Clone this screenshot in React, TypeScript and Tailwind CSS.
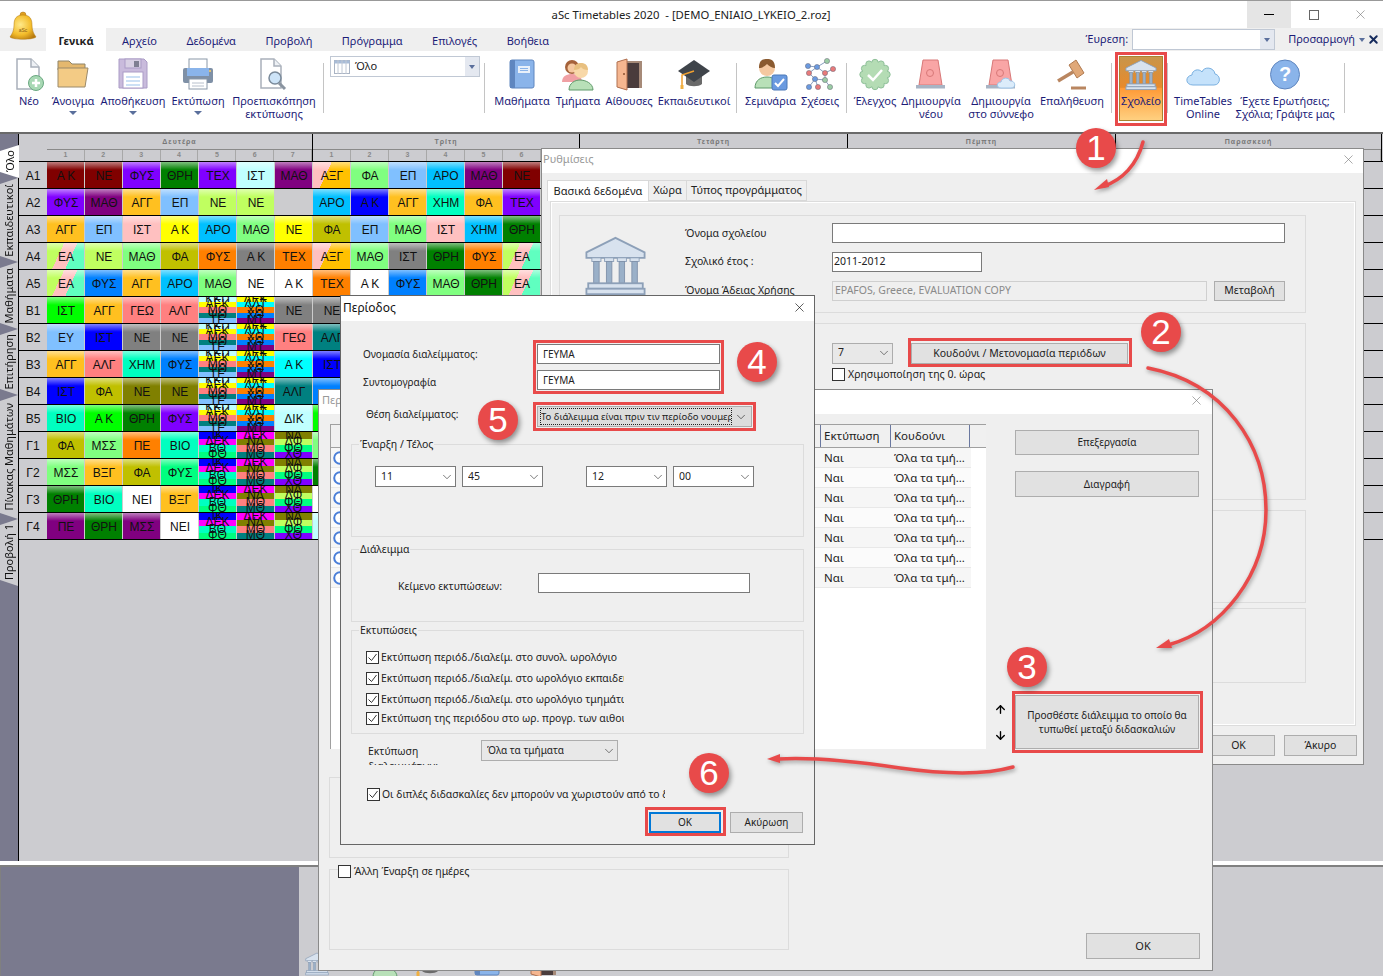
import { ArrowDown, ArrowUp, ChevronDown, X } from "lucide-react";
import { ReactNode } from "react";
import clsx from "clsx";
import { twMerge } from "tailwind-merge";

const colors: Record<string, string> = {
  mr: "bg-[#800000]",
  vi: "bg-[#8000ff]",
  dg: "bg-[#008000]",
  pu: "bg-[#800080]",
  lc: "bg-[#c0ffff]",
  go: "bg-[#ffc020]",
  sk: "bg-[#80c0ff]",
  li: "bg-[#c0ff60]",
  pk: "bg-[#ffc0c0]",
  ye: "bg-[#ffff00]",
  ar: "bg-[#00c0ff]",
  lg: "bg-[#80ff80]",
  oy: "bg-[#c0c000]",
  or: "bg-[#ff8000]",
  gr: "bg-[#808080]",
  wh: "bg-white",
  bl: "bg-[#0080ff]",
  ng: "bg-[#00ff00]",
  sa: "bg-[#ff8080]",
  db: "bg-[#0000ff]",
  te: "bg-[#008080]",
  aq: "bg-[#00ffc0]",
  sg: "bg-[#00ff80]",
  ol: "bg-[#808000]",
  cy: "bg-[#00ffff]",
  mg: "bg-[#ff00ff]",
  no: "bg-[#cccccf]",
  t1: "bg-[linear-gradient(115deg,#c0ff60_0_35%,#ffc0c0_35%_62%,#60ffc0_62%)]",
  t2: "bg-[linear-gradient(115deg,#ffc0c0_0_38%,#ffc000_38%)]",
};

const stacks: Record<string, string[]> = {
  A: ["ΚΚΠ:lc", "ΑΕΚ:ye", "ΜΘ:sa", "ΨΘ:te", "ΤΕ:sk"],
  B: ["ΛΕΚ:ye", "ΛΛΤ:cy", "ΧΘ:or", "ΧΘ:bl", "ΜΤ:pu"],
  C: ["ΙΚ:db", "ΔΕΚ:mg", "ΒΘ:aq", "ΦΘ:sg"],
  D: ["ΔΕΚ:mg", "ΝΛ:ol", "ΜΘ:sa", "ΜΘ:te"],
  E: ["ΝΛ:ol", "ΔΦ:li", "ΦΘ:sg", "ΧΘ:vi"],
};

const rows: [string, string[]][] = [
  ["A1", ["Α Κ:mr", "ΝΕ:mr", "ΦΥΣ:vi", "ΘΡΗ:dg", "ΤΕΧ:vi", "ΙΣΤ:lc", "ΜΑΘ:pu", "ΑΞΓ:t2", "ΦΑ:lg", "ΕΠ:sk", "ΑΡΟ:ar", "ΜΑΘ:pu", "ΝΕ:mr"]],
  ["A2", ["ΦΥΣ:vi", "ΜΑΘ:pu", "ΑΓΓ:go", "ΕΠ:sk", "ΝΕ:li", "ΝΕ:li", ":no", "ΑΡΟ:ar", "Α Κ:db", "ΑΓΓ:go", "ΧΗΜ:aq", "ΦΑ:go", "ΤΕΧ:vi"]],
  ["A3", ["ΑΓΓ:go", "ΕΠ:sk", "ΙΣΤ:pk", "Α Κ:ye", "ΑΡΟ:ar", "ΜΑΘ:lg", "ΝΕ:ye", "ΦΑ:oy", "ΕΠ:sk", "ΜΑΘ:lg", "ΙΣΤ:pk", "ΧΗΜ:ar", "ΘΡΗ:dg"]],
  ["A4", ["ΕΑ:t1", "ΝΕ:li", "ΜΑΘ:lg", "ΦΑ:oy", "ΦΥΣ:or", "Α Κ:gr", "ΤΕΧ:or", "ΑΞΓ:t2", "ΜΑΘ:lg", "ΙΣΤ:gr", "ΘΡΗ:dg", "ΦΥΣ:or", "ΕΑ:t1"]],
  ["A5", ["ΕΑ:t1", "ΦΥΣ:bl", "ΑΓΓ:go", "ΑΡΟ:ar", "ΜΑΘ:lg", "ΝΕ:wh", "Α Κ:wh", "ΤΕΧ:or", "Α Κ:wh", "ΦΥΣ:bl", "ΜΑΘ:lg", "ΘΡΗ:dg", "ΕΑ:t1"]],
  ["B1", ["ΙΣΤ:ng", "ΑΓΓ:go", "ΓΕΩ:sa", "ΑΛΓ:sa", "#A", "#B", "ΝΕ:gr", "ΝΕ:gr"]],
  ["B2", ["ΕΥ:sk", "ΙΣΤ:db", "ΝΕ:gr", "ΝΕ:gr", "#A", "#B", "ΓΕΩ:sa", "ΑΛΓ:te"]],
  ["B3", ["ΑΓΓ:go", "ΑΛΓ:sa", "ΧΗΜ:aq", "ΦΥΣ:bl", "#A", "#B", "Α Κ:cy", "ΙΣΤ:db"]],
  ["B4", ["ΙΣΤ:db", "ΦΑ:oy", "ΝΕ:ol", "ΝΕ:ol", "#A", "#B", "ΑΛΓ:te", ":bl"]],
  ["B5", ["ΒΙΟ:aq", "Α Κ:ng", "ΘΡΗ:dg", "ΦΥΣ:vi", "#A", "#B", "ΔΙΚ:lc", ":ng"]],
  ["Γ1", ["ΦΑ:oy", "ΜΣΣ:lg", "ΠΕ:or", "ΒΙΟ:aq", "#C", "#D", "#E", ":lg"]],
  ["Γ2", ["ΜΣΣ:lg", "ΒΞΓ:go", "ΦΑ:oy", "ΦΥΣ:sg", "#C", "#D", "#E", ":dg"]],
  ["Γ3", ["ΘΡΗ:dg", "ΒΙΟ:aq", "ΝΕΙ:wh", "ΒΞΓ:go", "#C", "#D", "#E", ":wh"]],
  ["Γ4", ["ΠΕ:pu", "ΘΡΗ:dg", "ΜΣΣ:pu", "ΝΕΙ:wh", "#C", "#D", "#E", ":lc"]],
];

const days = [
  { name: "Δευτέρα", w: "w-[266px]" },
  { name: "Τρίτη", w: "w-[267px]" },
  { name: "Τετάρτη", w: "w-[268px]" },
  { name: "Πέμπτη", w: "w-[268px]" },
  { name: "Παρασκευή", w: "w-[266px]" },
];

function Cell({ value }: { value: string }) {
  if (value.startsWith("#")) {
    const bands = stacks[value.slice(1)];
    return (
      <div className="flex h-[26px] w-[38px] flex-col overflow-hidden border-r border-[#ccc]">
        {bands.map((b, i) => {
          const [t, c] = b.split(":");
          return (
            <div
              key={i}
              className={clsx(
                "flex flex-1 items-center justify-center whitespace-nowrap leading-[5px]",
                colors[c]
              )}
            >
              {t}
            </div>
          );
        })}
      </div>
    );
  }
  const [t, c] = value.split(":");
  return (
    <div
      className={clsx(
        "relative flex h-[26px] w-[38px] items-center justify-center border-r border-[#ccc] pl-[1px] pt-[2px]",
        colors[c]
      )}
    >
      {c !== "no" && c !== "wh" && (
        <div className="absolute inset-x-0 top-0 h-[8px] bg-gradient-to-b from-white/50 to-transparent" />
      )}
      <span className="relative">{t}</span>
    </div>
  );
}

function Doc() {
  return (
    <>
      <path d="M4 1h14l8 8v22H4z" fill="#fff" stroke="#a9b0ba" strokeWidth="1.5" />
      <path d="M18 1v8h8" fill="#eef1f5" stroke="#a9b0ba" strokeWidth="1.5" />
    </>
  );
}

function NewIcon() {
  return (
    <svg width="32" height="33" viewBox="0 0 32 33">
      <Doc />
      <circle cx="23" cy="25" r="7.5" fill="#a8d8b4" stroke="#6aa880" />
      <path d="M23 21v8M19 25h8" stroke="#fff" strokeWidth="2.5" />
    </svg>
  );
}

function FolderIcon() {
  return (
    <svg width="34" height="33" viewBox="0 0 34 33">
      <path d="M2 3h11l3 3h13v6H2z" fill="#e4b86e" stroke="#8f8468" />
      <path d="M2 10h30l-3 19H2z" fill="#f3cb85" stroke="#9b8a6a" />
    </svg>
  );
}

function SaveIcon() {
  return (
    <svg width="32" height="33" viewBox="0 0 32 33">
      <path d="M2 1h25l3 3v26H2z" fill="#c9bbdc" stroke="#ab9cc6" />
      <rect x="8" y="1" width="16" height="9" fill="#d8d0e4" stroke="#ab9cc6" />
      <rect x="17" y="3" width="5" height="6" fill="#7f7f92" />
      <rect x="6" y="14" width="20" height="16" fill="#fff" stroke="#ab9cc6" />
      <path d="M9 19h14M9 23h14M9 27h14" stroke="#bcd6f2" strokeWidth="1.5" />
    </svg>
  );
}

function PrintIcon() {
  return (
    <svg width="32" height="33" viewBox="0 0 32 33">
      <rect x="7" y="1" width="18" height="10" fill="#fff" stroke="#8a98a8" />
      <rect x="1" y="10" width="30" height="15" rx="2" fill="#7f90a6" />
      <rect x="5" y="10" width="22" height="8" fill="#8ab4ea" />
      <circle cx="28" cy="13" r="1" fill="#ffd060" />
      <rect x="7" y="21" width="18" height="10" fill="#fff" stroke="#8a98a8" />
      <path d="M10 25h12M10 28h12" stroke="#b8c0cc" />
    </svg>
  );
}

function PreviewIcon() {
  return (
    <svg width="32" height="33" viewBox="0 0 32 33">
      <path d="M3 1h13l7 7v22H3z" fill="#fff" stroke="#a9b0ba" strokeWidth="1.5" />
      <path d="M16 1v7h7" fill="#eef1f5" stroke="#a9b0ba" strokeWidth="1.5" />
      <circle cx="17" cy="20" r="6" fill="#cde4f8" stroke="#7a8a9a" strokeWidth="1.5" />
      <path d="M21 25l6 6" stroke="#8a94a0" strokeWidth="3" />
    </svg>
  );
}

function BookIcon() {
  return (
    <svg width="28" height="33" viewBox="0 0 28 33">
      <rect x="2" y="2" width="24" height="28" rx="2" fill="#8ab4ea" stroke="#5f86bf" />
      <rect x="2" y="2" width="5" height="28" fill="#5f86bf" />
      <rect x="10" y="8" width="12" height="7" fill="#e8f0fa" />
      <path d="M12 10.5h8M12 12.5h8" stroke="#8ab4ea" />
    </svg>
  );
}

function PeopleIcon() {
  return (
    <svg width="34" height="33" viewBox="0 0 34 33">
      <circle cx="11" cy="9" r="7" fill="#a5623a" />
      <path d="M1 24c0-6 5-8 10-8s10 2 10 8z" fill="#f0a0a4" />
      <circle cx="11" cy="10" r="4.5" fill="#f5c8a0" />
      <path d="M8 32c0-7 6-10 11-10s13 3 13 10z" fill="#b8e0b8" stroke="#5f9a6a" />
      <circle cx="20" cy="13" r="7" fill="#f8d8a8" />
      <path d="M13 12c0-6 4-7 7-7s7 1 7 7c-3 0-6-1-7-3-1 2-4 3-7 3z" fill="#e8c080" />
    </svg>
  );
}

function DoorIcon() {
  return (
    <svg width="28" height="33" viewBox="0 0 28 33">
      <rect x="4" y="3" width="23" height="27" fill="#a68a78" />
      <rect x="9" y="5" width="15" height="25" fill="#4a3c3c" />
      <path d="M2 4l10-3v31l-10-3z" fill="#f5b690" stroke="#b07050" />
      <circle cx="9" cy="16" r="1" fill="#8a5030" />
    </svg>
  );
}

function CapIcon() {
  return (
    <svg width="34" height="33" viewBox="0 0 34 33">
      <path d="M9 14v12c3 3 13 3 16 0V14z" fill="#6a6a6a" />
      <path d="M17 2l16 11-16 11L1 13z" fill="#3f444a" />
      <path d="M17 13L5 17v11" fill="none" stroke="#f0a030" strokeWidth="1.5" />
      <path d="M5 27v4" stroke="#f0b040" strokeWidth="3" />
    </svg>
  );
}

function SeminarIcon() {
  return (
    <svg width="34" height="33" viewBox="0 0 34 33">
      <path d="M1 30c0-8 6-11 12-11s12 3 12 11z" fill="#b8e0b8" stroke="#5f9a6a" />
      <circle cx="13" cy="10" r="8" fill="#f5c8a0" />
      <path d="M5 10C5 2 9 1 13 1s8 1 8 9c-3 0-6-2-8-4-2 2-5 4-8 4z" fill="#8a5a30" />
      <rect x="18" y="17" width="15" height="15" rx="2" fill="#6a9ae0" stroke="#4a78b8" />
      <path d="M21 25l3 3 6-7" fill="none" stroke="#fff" strokeWidth="2" />
    </svg>
  );
}

function MoleculeIcon() {
  const nodes: [number, number, string][] = [
    [5, 8, "#6a9ae0"],
    [14, 9, "#6a9ae0"],
    [24, 3, "#9acca4"],
    [30, 11, "#e87a7a"],
    [22, 15, "#e87a7a"],
    [12, 21, "#6a9ae0"],
    [6, 15, "#e87a7a"],
    [22, 22, "#9acca4"],
    [6, 29, "#6a9ae0"],
    [27, 29, "#9acca4"],
    [15, 29, "#e87a7a"],
  ];
  return (
    <svg width="34" height="33" viewBox="0 0 34 33">
      <path
        d="M5 8l9 1 10-6M14 9l8 6 8-4M22 15v7l5 7M22 22l-10-1-6 8M12 21l-6-6M14 9l-8 6M12 21l3 8"
        fill="none"
        stroke="#8aa0c0"
      />
      {nodes.map(([x, y, c], i) => (
        <circle key={i} cx={x} cy={y} r="2.6" fill={c} stroke="#667" strokeWidth="0.5" />
      ))}
    </svg>
  );
}

function CheckBadge() {
  const dots = Array.from({ length: 12 }, (_, i) => (i * Math.PI) / 6);
  return (
    <svg width="32" height="33" viewBox="0 0 32 33">
      {dots.map((a, i) => (
        <circle
          key={i}
          cx={16 + 12 * Math.cos(a)}
          cy={16.5 + 12 * Math.sin(a)}
          r="3.2"
          fill="#b4dcb4"
          stroke="#8fc09a"
        />
      ))}
      <circle cx="16" cy="16.5" r="12.5" fill="#b4dcb4" />
      <path d="M9 17l5 5 9-10" fill="none" stroke="#fff" strokeWidth="2.5" />
    </svg>
  );
}

function AlarmIcon({ cloud }: { cloud?: boolean }) {
  return (
    <svg width="34" height="33" viewBox="0 0 34 33">
      <path d="M9 2h15l4 25H5z" fill="#f9a5a5" stroke="#d87878" />
      <circle cx="16" cy="15" r="3.5" fill="none" stroke="#d87878" />
      <rect x="2" y="27" width="29" height="3.5" fill="#a8b4c4" />
      {cloud && (
        <path
          d="M17 30c-5 0-5-6 0-6 1-5 8-5 9-1 5-1 7 7 1 7z"
          fill="#dcecfa"
          stroke="#9cc4e8"
        />
      )}
    </svg>
  );
}

function GavelIcon() {
  return (
    <svg width="32" height="33" viewBox="0 0 32 33">
      <path d="M2 23L17 14" stroke="#b98660" strokeWidth="3.5" />
      <path d="M13 7l7-5 8 13-7 5z" fill="#e0a878" stroke="#b07a50" />
      <path d="M15 30h15" stroke="#b98660" strokeWidth="3" />
    </svg>
  );
}

function BankIcon({ w = 34, h = 33 }: { w?: number; h?: number }) {
  return (
    <svg width={w} height={h} viewBox="0 0 34 33">
      <path d="M17 1L33 9v3H1V9z" fill="#d8e2ee" stroke="#8da0b8" />
      {[5, 12, 19, 26].map((x) => (
        <g key={x}>
          <rect x={x - 1} y="12" width="5" height="2" fill="#d8e2ee" stroke="#8da0b8" strokeWidth="0.5" />
          <rect x={x} y="14" width="3" height="12" fill="#9ab0c8" stroke="#8092aa" strokeWidth="0.5" />
        </g>
      ))}
      <rect x="2" y="26" width="30" height="3" fill="#d8e2ee" stroke="#8da0b8" />
      <rect x="1" y="29" width="32" height="3" fill="#d8e2ee" stroke="#8da0b8" />
    </svg>
  );
}

function CloudIcon() {
  return (
    <svg width="36" height="33" viewBox="0 0 36 33">
      <path
        d="M8 27c-8 0-8-9-1-10 0-5 7-7 10-3 2-6 12-5 13 2 6 1 6 11-1 11z"
        fill="#c5e2fb"
        stroke="#7ab0e0"
      />
    </svg>
  );
}

function HelpIcon() {
  return (
    <svg width="32" height="33" viewBox="0 0 32 33">
      <circle cx="16" cy="16.5" r="14.5" fill="#8ab4ea" stroke="#5f86bf" />
      <text x="16" y="23" textAnchor="middle" fontSize="20" fontWeight="700" fill="#fff" fontFamily="Liberation Sans">
        ?
      </text>
    </svg>
  );
}

function BellIcon() {
  return (
    <svg width="28" height="30" viewBox="0 0 28 30">
      <defs>
        <radialGradient id="bell" cx="40%" cy="40%" r="70%">
          <stop offset="0%" stopColor="#ffe98a" />
          <stop offset="60%" stopColor="#f3bc2a" />
          <stop offset="100%" stopColor="#b87a10" />
        </radialGradient>
      </defs>
      <circle cx="14" cy="4" r="3" fill="#e0a020" stroke="#a87010" strokeWidth="0.5" />
      <path d="M14 4c-7 0-9 4-9 10 0 6-2 9-4 12 3 3 23 3 26 0-2-3-4-6-4-12 0-6-2-10-9-10z" fill="url(#bell)" stroke="#b07810" strokeWidth="0.5" />
      <text x="14" y="21" textAnchor="middle" fontSize="5" fill="#8a5a10" fontFamily="Liberation Sans">aSc</text>
    </svg>
  );
}

function TableIcon() {
  return (
    <svg width="16" height="14" viewBox="0 0 16 14">
      <rect x="0.5" y="0.5" width="15" height="13" fill="#fff" stroke="#aab4c4" />
      <rect x="0.5" y="0.5" width="15" height="3" fill="#a8bcd8" />
      <path d="M4 0v14M8 0v14M12 0v14" stroke="#c0c8d4" />
    </svg>
  );
}

function Globe() {
  return (
    <svg width="14" height="14" viewBox="0 0 14 14" className="shrink-0">
      <circle cx="7" cy="7" r="5.8" fill="#fff" stroke="#4a7ed8" strokeWidth="2" />
      <path d="M7 7l3-3M7 7l2 3" stroke="#e8a0a0" />
    </svg>
  );
}

function Caret() {
  return <div className="mt-[4px] h-0 w-0 border-x-[4px] border-t-[4px] border-x-transparent border-t-[#5a6f9c]" />;
}

function Tool({
  w,
  icon,
  label,
  caret,
}: {
  w: string;
  icon: ReactNode;
  label: string[];
  caret?: boolean;
}) {
  return (
    <div className={clsx("flex shrink-0 flex-col items-center pt-[7px]", w)}>
      <div className="flex h-[33px] items-center justify-center">{icon}</div>
      <div className="mt-[3px] whitespace-nowrap text-center leading-[13px]">
        {label.map((l) => (
          <div key={l}>{l}</div>
        ))}
      </div>
      {caret && <Caret />}
    </div>
  );
}

function Sep({ ml }: { ml: string }) {
  return <div className={clsx("mt-[12px] h-[50px] w-px shrink-0 bg-[#c4c4c4]", ml)} />;
}

function Btn({ className, children }: { className: string; children: ReactNode }) {
  return (
    <div
      className={twMerge(
        "flex shrink-0 items-center justify-center border border-[#adadad] bg-[#e1e1e1] text-center",
        className
      )}
    >
      {children}
    </div>
  );
}

function Field({ className, children }: { className: string; children?: ReactNode }) {
  return (
    <div className={twMerge("flex shrink-0 items-center border border-[#7a7a7a] bg-white px-[5px]", className)}>
      {children}
    </div>
  );
}

function Combo({ className, children }: { className: string; children: ReactNode }) {
  return (
    <div className={twMerge("flex shrink-0 items-center justify-between border border-[#7a7a7a] pl-[5px] pr-[1px]", className)}>
      <span className="overflow-hidden whitespace-nowrap">{children}</span>
      <ChevronDown size={14} strokeWidth={1.1} className="shrink-0 text-[#333]" />
    </div>
  );
}

function Check({ on }: { on?: boolean }) {
  return (
    <div className="flex h-[13px] w-[13px] shrink-0 items-center justify-center border border-[#333] bg-white">
      {on && (
        <svg width="11" height="11" viewBox="0 0 11 11">
          <path d="M1.5 5.5l3 3 5-6.5" fill="none" stroke="#333" strokeWidth="1" />
        </svg>
      )}
    </div>
  );
}

function Group({ className, legend, children }: { className: string; legend?: string; children?: ReactNode }) {
  return (
    <div className={clsx("relative shrink-0 border border-[#dcdcdc]", className)}>
      {legend && (
        <span className="absolute left-[7px] top-[-8px] bg-[#efefef] px-[1px] leading-[14px]">{legend}</span>
      )}
      {children}
    </div>
  );
}

function Badge({ n, className }: { n: number; className: string }) {
  return (
    <div
      className={clsx(
        "absolute flex h-[40px] w-[40px] items-center justify-center rounded-full bg-[#e84a4a] font-['Liberation_Sans',sans-serif] text-[35px] text-white shadow-[2px_3px_5px_rgba(0,0,0,0.4)]",
        className
      )}
    >
      {n}
    </div>
  );
}

function Frame({ className }: { className: string }) {
  return <div className={clsx("absolute border-[3px] border-[#e84a4a]", className)} />;
}

export default function App() {
  return (
    <div className="relative flex h-[976px] w-[1383px] flex-col overflow-hidden bg-white font-['Noto_Sans',sans-serif] text-[11px] text-[#222]">
      {/* title bar */}
      <div className="flex h-[28px] shrink-0 border-t border-[#999]">
        <div className="flex-1 pl-[135px] pt-[6px] text-center text-[11.3px] leading-[16px]">
          aSc Timetables 2020&nbsp; - [DEMO_ENIAIO_LYKEIO_2.roz]
        </div>
        <div className="flex w-[136px] text-[#555]">
          <div className="flex w-[44px] items-center justify-center bg-[#e5e5e5]">
            <div className="h-px w-[10px] bg-black" />
          </div>
          <div className="flex w-[46px] items-center justify-center">
            <div className="h-[10px] w-[10px] border border-[#666]" />
          </div>
          <div className="flex w-[46px] items-center justify-center">
            <X size={15} strokeWidth={1} className="text-[#777]" />
          </div>
        </div>
      </div>
      <div className="absolute left-[9px] top-[11px]">
        <BellIcon />
      </div>

      {/* ribbon tabs */}
      <div className="flex h-[23px] shrink-0 items-center bg-[#efefef] pl-[46px] text-[#1c1c78]">
        <div className="flex h-full w-[60px] items-center justify-center bg-white pt-[3px] font-bold text-[#222]">Γενικά</div>
        <div className="ml-[16px] flex gap-[29.5px] pt-[3px]">
          <span>Αρχείο</span>
          <span>Δεδομένα</span>
          <span>Προβολή</span>
          <span>Πρόγραμμα</span>
          <span>Επιλογές</span>
          <span>Βοήθεια</span>
        </div>
        <span className="ml-auto">Έυρεση:</span>
        <div className="ml-[4px] flex h-[21px] w-[143px] justify-end border border-[#c0c8d4] bg-white">
          <div className="flex w-[14px] items-center justify-center bg-[#e4e8f0]">
            <div className="h-0 w-0 border-x-[3.5px] border-t-[4px] border-x-transparent border-t-[#5a6f9c]" />
          </div>
        </div>
        <span className="ml-[13px]">Προσαρμογή</span>
        <div className="ml-[4px] h-0 w-0 border-x-[3.5px] border-t-[4px] border-x-transparent border-t-[#5a6f9c]" />
        <X size={13} strokeWidth={3.5} className="ml-[2px] mr-[3px] text-[#152a5c]" />
      </div>

      {/* toolbar */}
      <div className="flex h-[83px] shrink-0 border-b-2 border-[#6a6a6a] bg-white pl-[7px] text-[#1c1c78]">
        <Tool w="w-[44px]" icon={<NewIcon />} label={["Νέο"]} />
        <Tool w="w-[44px]" icon={<FolderIcon />} label={["Άνοιγμα"]} caret />
        <Tool w="w-[76px]" icon={<SaveIcon />} label={["Αποθήκευση"]} caret />
        <Tool w="w-[54px]" icon={<PrintIcon />} label={["Εκτύπωση"]} caret />
        <Tool w="w-[98px]" icon={<PreviewIcon />} label={["Προεπισκόπηση", "εκτύπωσης"]} />
        <Sep ml="ml-0" />
        <div className="ml-[6px] mt-[5px] flex h-[21px] w-[150px] shrink-0 items-center border border-[#c0c8d4] pl-[3px] text-[#222]">
          <TableIcon />
          <span className="ml-[5px]">Όλο</span>
          <div className="ml-auto flex h-full w-[14px] items-center justify-center bg-[#e4e8f0]">
            <div className="h-0 w-0 border-x-[3.5px] border-t-[4px] border-x-transparent border-t-[#5a6f9c]" />
          </div>
        </div>
        <Sep ml="ml-[4px]" />
        <Tool w="w-[56px] ml-[9px]" icon={<BookIcon />} label={["Μαθήματα"]} />
        <Tool w="w-[56px]" icon={<PeopleIcon />} label={["Τμήματα"]} />
        <Tool w="w-[46px]" icon={<DoorIcon />} label={["Αίθουσες"]} />
        <Tool w="w-[84px]" icon={<CapIcon />} label={["Εκπαιδευτικοί"]} />
        <Sep ml="ml-0" />
        <Tool w="w-[66px] pl-[1px]" icon={<SeminarIcon />} label={["Σεμινάρια"]} />
        <Tool w="w-[34px]" icon={<MoleculeIcon />} label={["Σχέσεις"]} />
        <Sep ml="ml-[9px]" />
        <Tool w="w-[56px]" icon={<CheckBadge />} label={["Έλεγχος"]} />
        <Tool w="w-[56px]" icon={<AlarmIcon />} label={["Δημιουργία", "νέου"]} />
        <Tool w="w-[84px]" icon={<AlarmIcon cloud />} label={["Δημιουργία", "στο σύννεφο"]} />
        <Tool w="w-[58px]" icon={<GavelIcon />} label={["Επαλήθευση"]} />
        <Sep ml="ml-[10px]" />
        <div className="ml-[7px] mt-[5px] flex h-[65px] w-[44px] shrink-0 flex-col items-center border border-[#a88430] bg-[linear-gradient(#c8954a_0%,#e88a2c_48%,#ff9a36_50%,#ffd080_100%)] pt-[1px]">
          <div className="flex h-[33px] items-center">
            <BankIcon w={32} h={32} />
          </div>
          <div className="mt-[3px] leading-[13px]">Σχολείο</div>
        </div>
        <Sep ml="ml-[4px]" />
        <Tool w="w-[70px]" icon={<CloudIcon />} label={["TimeTables", "Online"]} />
        <Tool w="w-[94px]" icon={<HelpIcon />} label={["Έχετε Ερωτήσεις;", "Σχόλια; Γράψτε μας"]} />
        <Sep ml="ml-[12px]" />
      </div>

      {/* timetable */}
      <div className="flex h-[727px] shrink-0 bg-[#ccccd0] font-['Liberation_Sans',sans-serif] text-[12px] text-[#111]">
        <div className="flex w-[19px] shrink-0 flex-col border-r border-black bg-[#7a7a8e] pt-[11px] font-['Noto_Sans',sans-serif] text-[11px]">
          {[
            { t: "Όλο", c: "relative h-[33px] w-[19px] bg-white" },
            { t: "Εκπαιδευτικοί", c: "h-[84px] w-[18px] bg-[#ccccd0]" },
            { t: "Μαθήματα", c: "h-[67px] w-[18px] bg-[#ccccd0]" },
            { t: "Επιτήρηση", c: "h-[66px] w-[18px] bg-[#ccccd0]" },
            { t: "Πίνακας Μαθημάτων", c: "h-[124px] w-[18px] bg-[#ccccd0]" },
            { t: "Προβολή 1", c: "h-[67px] w-[18px] bg-[#ccccd0]" },
          ].map((tab) => (
            <div
              key={tab.t}
              className={clsx(
                "flex shrink-0 items-center justify-center overflow-hidden [clip-path:polygon(0_6px,100%_0,100%_100%,0_calc(100%-6px))]",
                tab.c
              )}
            >
              <span className="rotate-180 whitespace-nowrap leading-[18px] [writing-mode:vertical-rl]">{tab.t}</span>
            </div>
          ))}
        </div>
        <div className="flex-1">
          <div className="flex h-[28px] border-b border-black">
            <div className="w-[28px] shrink-0" />
            {days.map((d) => (
              <div key={d.name} className={clsx("flex shrink-0 flex-col border-r border-black", d.w)}>
                <div className="flex h-[16px] items-center justify-center border-b border-[#8a8a8a] pt-[1px] text-[7px] font-bold tracking-[1px] text-[#777]">
                  {d.name}
                </div>
                <div className="flex flex-1">
                  {[1, 2, 3, 4, 5, 6, 7].map((n) => (
                    <div key={n} className="flex w-[38px] items-center justify-center border-r border-[#a8a8a8] text-[7px] font-bold text-[#888]">
                      {n}
                    </div>
                  ))}
                </div>
              </div>
            ))}
          </div>
          {rows.map(([name, cells]) => (
            <div key={name} className="flex h-[27px] border-b border-black">
              <div className="flex w-[28px] shrink-0 items-center justify-center pt-[2px]">{name}</div>
              {cells.map((v, i) => (
                <Cell key={i} value={v} />
              ))}
            </div>
          ))}
        </div>
      </div>

      {/* bottom panel */}
      <div className="h-[4px] shrink-0 bg-white" />
      <div className="flex flex-1 overflow-hidden border-t-2 border-[#808080] bg-[#ccccd0]">
        <div className="w-[299px] shrink-0 border-l border-[#808080] bg-[#7a7a8e]" />
        <div className="flex items-start pt-[85px]">
          <div className="ml-[6px]">
            <BankIcon w={24} h={24} />
          </div>
          <div className="-mt-[7px] ml-[36px]">
            <PeopleIcon />
          </div>
          <div className="-mt-[7px] ml-[14px]">
            <CapIcon />
          </div>
          <div className="-mt-[7px] ml-[26px]">
            <BookIcon />
          </div>
          <div className="-mt-[7px] ml-[28px]">
            <DoorIcon />
          </div>
        </div>
      </div>

      {/* Ρυθμίσεις */}
      <div className="absolute left-[541px] top-[148px] h-[617px] w-[823px] border border-[#8a8a8a] bg-[#efefef] text-[10.5px]">
        <div className="flex h-[24px] items-start justify-between bg-white pl-[1px] pr-[7px] pt-[2px] text-[11px] text-[#999]">
          <span>Ρυθμίσεις</span>
          <X size={15} strokeWidth={1} className="mt-[1px] text-[#777]" />
        </div>
        <div className="mt-[7px] flex h-[21px] pl-[5px] text-[11px]">
          <div className="flex w-[102px] items-center justify-center border border-b-0 border-[#d8d8d8] bg-white">Βασικά δεδομένα</div>
          <div className="flex w-[38px] items-center justify-center border-y border-r border-[#d8d8d8]">Χώρα</div>
          <div className="flex w-[120px] items-center justify-center border-y border-r border-[#d8d8d8]">Τύπος προγράμματος</div>
        </div>
        <div className="ml-[8px] flex h-[525px] w-[806px] flex-col border border-[#dcdcdc] pl-[8px] pt-[13px] shadow-[inset_0_0_0_1px_#fff]">
          <Group className="flex h-[98px] w-[747px]">
            <div className="ml-[24px] mt-[20px] shrink-0">
              <BankIcon w={63} h={60} />
            </div>
            <div className="ml-[38px] flex flex-col gap-[9px] pt-[7px]">
              <div className="flex h-[20px] items-center">
                <span className="w-[147px] pt-[2px]">Όνομα σχολείου</span>
                <Field className="h-[20px] w-[453px]" />
              </div>
              <div className="flex h-[20px] items-center">
                <span className="w-[147px]">Σχολικό έτος :</span>
                <Field className="h-[20px] w-[150px] px-[1px]">2011-2012</Field>
              </div>
              <div className="flex h-[20px] items-center">
                <span className="w-[147px]">Όνομα Άδειας Χρήσης</span>
                <div className="flex h-[20px] w-[375px] shrink-0 items-center border border-[#cfcfcf] px-[2px] text-[#8a8a8a]">
                  EPAFOS, Greece, EVALUATION COPY
                </div>
                <Btn className="ml-[7px] h-[20px] w-[71px]">Μεταβολή</Btn>
              </div>
            </div>
          </Group>
          <Group className="mt-[10px] h-[177px] w-[747px] pl-[272px] pt-[18px]">
            <div className="flex items-center">
              <Combo className="h-[21px] w-[61px] border-[#adadad] bg-[#e8e8e8]">7</Combo>
              <Btn className="ml-[18px] mt-[1px] h-[21px] w-[217px]">Κουδούνι / Μετονομασία περιόδων</Btn>
            </div>
            <div className="mt-[3px] flex items-center gap-[3px]">
              <Check />
              <span>Χρησιμοποίηση της 0. ώρας</span>
            </div>
          </Group>
          <Group className="mt-[10px] h-[93px] w-[747px]" />
          <Group className="mt-[5px] h-[75px] w-[747px]" />
        </div>
        <div className="mt-[9px] flex justify-end gap-[9px] pr-[6px]">
          <Btn className="h-[21px] w-[73px]">OK</Btn>
          <Btn className="h-[21px] w-[73px]">Άκυρο</Btn>
        </div>
      </div>

      {/* Περίοδοι */}
      <div className="absolute left-[318px] top-[389px] h-[582px] w-[895px] border border-[#8a8a8a] bg-[#efefef]">
        <div className="flex h-[24px] items-start justify-between bg-white pl-[3px] pr-[8px] pt-[2px] text-[#999]">
          <span>Περίοδοι</span>
          <X size={15} strokeWidth={1} className="mt-[1px] text-[#777]" />
        </div>
        <div className="mt-[10px] flex h-[325px]">
          <div className="ml-[11px] w-[656px] shrink-0 border-l border-t border-[#a0a0a0] bg-white text-[11.5px]">
            <div className="flex h-[23px] border-b border-[#a0a0a0] bg-[#f0f0f0] pl-[489px]">
              <div className="flex w-[70px] items-center border-l border-[#6a78a0] pl-[3px]">Εκτύπωση</div>
              <div className="flex w-[80px] items-center border-x border-[#6a78a0] pl-[3px]">Κουδούνι</div>
            </div>
            {[0, 1, 2, 3, 4, 5, 6].map((i) => (
              <div
                key={i}
                className={clsx(
                  "flex h-[20px] w-[640px] items-center border-b border-[#e8e8e8] pl-[2px] pt-[1px]",
                  i % 2 === 0 ? "bg-[#f6f6f6]" : "bg-[#fbfbfb]"
                )}
              >
                <Globe />
                <span className="ml-[477px] w-[70px]">Ναι</span>
                <span>Όλα τα τμή...</span>
              </div>
            ))}
          </div>
          <div className="flex w-[29px] shrink-0 flex-col items-center justify-end gap-[13px] pb-[7px] text-black">
            <ArrowUp size={13} strokeWidth={2.5} />
            <ArrowDown size={13} strokeWidth={2.5} />
          </div>
          <div className="flex w-[184px] shrink-0 flex-col text-[10px]">
            <Btn className="mt-[6px] h-[25px] w-full">Επεξεργασία</Btn>
            <Btn className="mt-[16px] h-[26px] w-full">Διαγραφή</Btn>
            <Btn className="mt-auto h-[54px] w-full leading-[14px]">
              Προσθέστε διάλειμμα το οποίο θα
              <br />
              τυπωθεί μεταξύ διδασκαλιών
            </Btn>
          </div>
        </div>
        <div className="mt-[28px] flex justify-between pl-[10px] pr-[12px]">
          <div className="flex flex-col pb-[9px]">
            <Group className="h-[81px] w-[460px]" />
            <Group className="mt-[11px] h-[81px] w-[460px] text-[10.5px]">
              <div className="absolute left-[8px] top-[-6px] flex items-center gap-[3px] bg-[#efefef] pr-[2px]">
                <Check />
                <span>Άλλη Έναρξη σε ημέρες</span>
              </div>
            </Group>
          </div>
          <Btn className="h-[26px] w-[114px] self-end">OK</Btn>
        </div>
      </div>

      {/* Περίοδος */}
      <div className="absolute left-[340px] top-[295px] h-[550px] w-[475px] border border-[#666] bg-[#efefef] text-[10px]">
        <div className="flex h-[25px] items-center justify-between bg-white pl-[2px] pr-[7px] pb-[2px] text-[12px] text-[#111]">
          <span>Περίοδος</span>
          <X size={15} strokeWidth={1} className="text-black" />
        </div>
        <div className="mt-[23px] flex h-[20px] items-center pl-[22px]">
          <span className="w-[174px]">Ονομασία διαλείμματος:</span>
          <Field className="h-[20px] w-[183px]">ΓΕΥΜΑ</Field>
        </div>
        <div className="mt-[6px] flex h-[20px] items-center pl-[22px]">
          <span className="w-[174px] pt-[4px]">Συντομογραφία</span>
          <Field className="h-[20px] w-[183px]">ΓΕΥΜΑ</Field>
        </div>
        <div className="mt-[16px] flex h-[21px] items-center pl-[25px]">
          <span className="w-[171px] -translate-y-[2px]">Θέση διαλείμματος:</span>
          <div className="flex h-[21px] w-[215px] shrink-0 items-center justify-between border border-[#adadad] bg-[#dcdcdc] pl-[2px] pr-[3px]">
            <span className="w-[192px] overflow-hidden whitespace-nowrap border border-dotted border-[#222] text-[9.5px] leading-[15px]">
              Το διάλειμμα είναι πριν τιν περίοδο νουμερο
            </span>
            <ChevronDown size={14} strokeWidth={1.1} className="shrink-0" />
          </div>
        </div>
        <Group className="ml-[10px] mt-[17px] h-[93px] w-[453px] pl-[23px] pt-[21px] text-[10.5px]" legend="Έναρξη / Τέλος">
          <div className="flex">
            <Combo className="h-[21px] w-[81px] bg-white">11</Combo>
            <Combo className="ml-[6px] h-[21px] w-[81px] bg-white">45</Combo>
            <Combo className="ml-[43px] h-[21px] w-[81px] bg-white">12</Combo>
            <Combo className="ml-[6px] h-[21px] w-[81px] bg-white">00</Combo>
          </div>
        </Group>
        <Group className="ml-[10px] mt-[12px] h-[73px] w-[453px] pl-[46px] pt-[21px] text-[10.4px]" legend="Διάλειμμα">
          <div className="flex items-center">
            <span className="w-[140px] pt-[8px]">Κείμενο εκτυπώσεων:</span>
            <Field className="h-[20px] w-[212px]" />
          </div>
        </Group>
        <Group className="ml-[10px] mt-[8px] h-[104px] w-[453px] pl-[14px] pt-[20px] text-[10.4px]" legend="Εκτυπώσεις">
          {[
            { t: "Εκτύπωση περιόδ./διαλείμ. στο συνολ. ωρολόγιο", c: "" },
            { t: "Εκτύπωση περιόδ./διαλείμ. στο ωρολόγιο εκπαιδευτικών", c: "mt-[8px]" },
            { t: "Εκτύπωση περιόδ./διαλείμ. στο ωρολόγιο τμημάτων", c: "mt-[8px]" },
            { t: "Εκτύπωση της περιόδου στο ωρ. προγρ. των αιθουσών", c: "mt-[6px]" },
          ].map((r) => (
            <div key={r.t} className={clsx("flex h-[13px] items-center gap-[2px]", r.c)}>
              <Check on />
              <span className="w-[243px] overflow-hidden whitespace-nowrap">{r.t}</span>
            </div>
          ))}
        </Group>
        <div className="mt-[6px] flex h-[21px] pl-[27px] text-[10.4px]">
          <div className="mt-[4px] h-[21px] w-[113px] overflow-hidden leading-[15px]">
            Εκτύπωση
            <br />
            διαλειμμάτων:
          </div>
          <Combo className="h-[21px] w-[137px] border-[#adadad] bg-[#e8e8e8] text-[10px]">Όλα τα τμήματα</Combo>
        </div>
        <div className="mt-[27px] flex h-[13px] items-center gap-[2px] pl-[26px] text-[10.4px]">
          <Check on />
          <span className="w-[283px] overflow-hidden whitespace-nowrap">Οι διπλές διδασκαλίες δεν μπορούν να χωριστούν από το διάλειμμα</span>
        </div>
        <div className="mt-[11px] flex justify-end gap-[9px] pr-[11px]">
          <Btn className="h-[21px] w-[72px] border-2 border-[#0078d7]">OK</Btn>
          <Btn className="h-[21px] w-[73px]">Ακύρωση</Btn>
        </div>
      </div>

      {/* annotations */}
      <Frame className="left-[1115px] top-[52px] h-[74px] w-[52px]" />
      <Frame className="left-[908px] top-[338px] h-[29px] w-[224px]" />
      <Frame className="left-[1012px] top-[691px] h-[62px] w-[191px]" />
      <Frame className="left-[533px] top-[340px] h-[54px] w-[191px]" />
      <Frame className="left-[533px] top-[402px] h-[29px] w-[223px]" />
      <Frame className="left-[645px] top-[807px] h-[29px] w-[81px]" />

      <svg className="pointer-events-none absolute left-0 top-0 [filter:drop-shadow(1px_2px_2px_rgba(0,0,0,0.35))]" width="1383" height="976" viewBox="0 0 1383 976">
        <g fill="none" stroke="#e84a4a" strokeWidth="3.5" strokeLinecap="round">
          <path d="M1143 142C1137 165 1122 180 1104 186" />
          <path d="M1148 368C1225 383 1266 445 1266 510C1266 575 1222 630 1168 645" />
          <path d="M1013 767C985 775 950 775 900 768C860 762 810 757 778 759" />
        </g>
        <g fill="#e84a4a">
          <path d="M1094 190l13-11 2 8z" />
          <path d="M1156 648l13-9 3 9z" />
          <path d="M767 759l13-5 0 9z" />
        </g>
      </svg>

      <Badge n={1} className="left-[1076px] top-[128px]" />
      <Badge n={2} className="left-[1141px] top-[312px]" />
      <Badge n={3} className="left-[1007px] top-[647px]" />
      <Badge n={4} className="left-[737px] top-[342px]" />
      <Badge n={5} className="left-[478px] top-[400px]" />
      <Badge n={6} className="left-[689px] top-[753px]" />
    </div>
  );
}
